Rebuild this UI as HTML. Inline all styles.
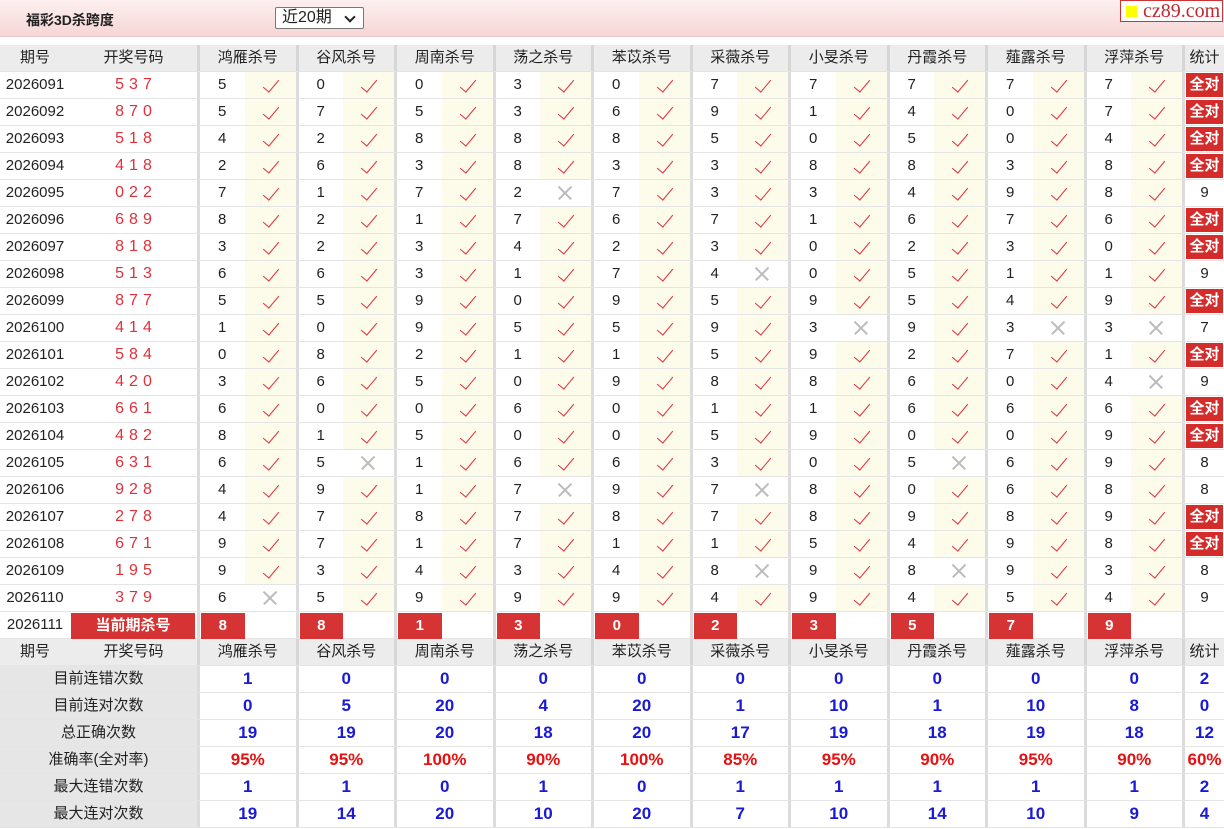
<!DOCTYPE html>
<html><head><meta charset="utf-8">
<style>
*{box-sizing:border-box;margin:0;padding:0}
body{width:1224px;height:829px;overflow:hidden;background:#fff;font-family:"Liberation Sans","Noto Sans CJK SC",sans-serif;font-size:15px;color:#222}
.top{position:absolute;left:0;top:0;width:1224px;height:37px;background:linear-gradient(#fdf0f0,#f6d6d6);border-bottom:1px solid #e8c8c8}
.title{position:absolute;left:26px;top:10px;font-size:14px;font-weight:bold;color:#222}
.sel{position:absolute;left:275px;top:7px;width:89px;height:22px;border:1px solid #777;border-radius:2px;background:#fff;font-size:16px;padding-left:6px;line-height:20px}
.sel:after{content:"";position:absolute;right:9px;top:5px;width:6px;height:6px;border-right:2px solid #222;border-bottom:2px solid #222;transform:rotate(45deg)}
.logo{position:absolute;left:1120px;top:0;width:103px;height:22px;border:1px solid #c33;background:#fff;font-family:"Liberation Serif",serif;font-size:20px;color:#c0282e;line-height:20px;padding-left:22px}
.logo:before{content:"";position:absolute;left:5px;top:5px;width:11px;height:11px;background:#ff0}
.tb{position:absolute;left:0;top:45px;width:1224px}
.r{display:grid;grid-template-columns:70px 127px repeat(10,3px 44.5px 51px) 3px 39px;height:27px;border-bottom:1px solid #e4e4e4}
.r>div{height:26px;line-height:26px;text-align:center;position:relative}
.s{background:#dcdcdc}
.h>div{background:#ececec}
.h>.s{background:#d6d6d6}
.o{color:#e0303a;letter-spacing:5px;font-size:16px;padding-left:5px}
.n{text-align:left!important;padding-left:18px}
.c{background:#fdfbea}
.c:after{content:"";position:absolute;left:22px;top:4px;width:7px;height:15px;border-right:1.6px solid #e23344;border-bottom:1.6px solid #e23344;transform:rotate(40deg)}
.x:before,.x:after{content:"";position:absolute;left:16px;top:12px;width:18px;height:1.5px;background:#bbb;transform:rotate(45deg)}
.x:after{transform:rotate(-45deg)}
.q{background:#d42b2b!important;color:#fff;font-weight:bold;margin:1px;height:24px!important;line-height:24px!important}
.k{background:#d63434;color:#fff;font-weight:bold;margin:1px 0 1px 1px}
.st{display:grid;grid-template-columns:197px repeat(10,3px 95.5px) 3px 39px;height:27px;border-bottom:1px solid #e4e4e4}
.st>div{height:26px;line-height:26px;text-align:center;color:#1a1ad6;font-weight:bold;font-size:17px}
.st>div:first-child{background:#e6e6e6;color:#222;font-weight:normal;font-size:15px}
.st>.s{background:#dcdcdc}
.rd>div{color:#e81010}
</style></head><body>
<div class="top"><div class="title">福彩3D杀跨度</div><div class="sel">近20期</div><div class="logo">cz89.com</div></div>
<div class="tb">
<div class="r h"><div>期号</div><div>开奖号码</div><div class="s"></div><div style="grid-column:span 2">鸿雁杀号</div><div class="s"></div><div style="grid-column:span 2">谷风杀号</div><div class="s"></div><div style="grid-column:span 2">周南杀号</div><div class="s"></div><div style="grid-column:span 2">荡之杀号</div><div class="s"></div><div style="grid-column:span 2">苯苡杀号</div><div class="s"></div><div style="grid-column:span 2">采薇杀号</div><div class="s"></div><div style="grid-column:span 2">小旻杀号</div><div class="s"></div><div style="grid-column:span 2">丹霞杀号</div><div class="s"></div><div style="grid-column:span 2">薤露杀号</div><div class="s"></div><div style="grid-column:span 2">浮萍杀号</div><div class="s"></div><div>统计</div></div>

<div class="r"><div>2026091</div><div class="o">537</div><div class="s"></div><div class="n">5</div><div class="c"></div><div class="s"></div><div class="n">0</div><div class="c"></div><div class="s"></div><div class="n">0</div><div class="c"></div><div class="s"></div><div class="n">3</div><div class="c"></div><div class="s"></div><div class="n">0</div><div class="c"></div><div class="s"></div><div class="n">7</div><div class="c"></div><div class="s"></div><div class="n">7</div><div class="c"></div><div class="s"></div><div class="n">7</div><div class="c"></div><div class="s"></div><div class="n">7</div><div class="c"></div><div class="s"></div><div class="n">7</div><div class="c"></div><div class="s"></div><div class="q">全对</div></div>
<div class="r"><div>2026092</div><div class="o">870</div><div class="s"></div><div class="n">5</div><div class="c"></div><div class="s"></div><div class="n">7</div><div class="c"></div><div class="s"></div><div class="n">5</div><div class="c"></div><div class="s"></div><div class="n">3</div><div class="c"></div><div class="s"></div><div class="n">6</div><div class="c"></div><div class="s"></div><div class="n">9</div><div class="c"></div><div class="s"></div><div class="n">1</div><div class="c"></div><div class="s"></div><div class="n">4</div><div class="c"></div><div class="s"></div><div class="n">0</div><div class="c"></div><div class="s"></div><div class="n">7</div><div class="c"></div><div class="s"></div><div class="q">全对</div></div>
<div class="r"><div>2026093</div><div class="o">518</div><div class="s"></div><div class="n">4</div><div class="c"></div><div class="s"></div><div class="n">2</div><div class="c"></div><div class="s"></div><div class="n">8</div><div class="c"></div><div class="s"></div><div class="n">8</div><div class="c"></div><div class="s"></div><div class="n">8</div><div class="c"></div><div class="s"></div><div class="n">5</div><div class="c"></div><div class="s"></div><div class="n">0</div><div class="c"></div><div class="s"></div><div class="n">5</div><div class="c"></div><div class="s"></div><div class="n">0</div><div class="c"></div><div class="s"></div><div class="n">4</div><div class="c"></div><div class="s"></div><div class="q">全对</div></div>
<div class="r"><div>2026094</div><div class="o">418</div><div class="s"></div><div class="n">2</div><div class="c"></div><div class="s"></div><div class="n">6</div><div class="c"></div><div class="s"></div><div class="n">3</div><div class="c"></div><div class="s"></div><div class="n">8</div><div class="c"></div><div class="s"></div><div class="n">3</div><div class="c"></div><div class="s"></div><div class="n">3</div><div class="c"></div><div class="s"></div><div class="n">8</div><div class="c"></div><div class="s"></div><div class="n">8</div><div class="c"></div><div class="s"></div><div class="n">3</div><div class="c"></div><div class="s"></div><div class="n">8</div><div class="c"></div><div class="s"></div><div class="q">全对</div></div>
<div class="r"><div>2026095</div><div class="o">022</div><div class="s"></div><div class="n">7</div><div class="c"></div><div class="s"></div><div class="n">1</div><div class="c"></div><div class="s"></div><div class="n">7</div><div class="c"></div><div class="s"></div><div class="n">2</div><div class="x"></div><div class="s"></div><div class="n">7</div><div class="c"></div><div class="s"></div><div class="n">3</div><div class="c"></div><div class="s"></div><div class="n">3</div><div class="c"></div><div class="s"></div><div class="n">4</div><div class="c"></div><div class="s"></div><div class="n">9</div><div class="c"></div><div class="s"></div><div class="n">8</div><div class="c"></div><div class="s"></div><div>9</div></div>
<div class="r"><div>2026096</div><div class="o">689</div><div class="s"></div><div class="n">8</div><div class="c"></div><div class="s"></div><div class="n">2</div><div class="c"></div><div class="s"></div><div class="n">1</div><div class="c"></div><div class="s"></div><div class="n">7</div><div class="c"></div><div class="s"></div><div class="n">6</div><div class="c"></div><div class="s"></div><div class="n">7</div><div class="c"></div><div class="s"></div><div class="n">1</div><div class="c"></div><div class="s"></div><div class="n">6</div><div class="c"></div><div class="s"></div><div class="n">7</div><div class="c"></div><div class="s"></div><div class="n">6</div><div class="c"></div><div class="s"></div><div class="q">全对</div></div>
<div class="r"><div>2026097</div><div class="o">818</div><div class="s"></div><div class="n">3</div><div class="c"></div><div class="s"></div><div class="n">2</div><div class="c"></div><div class="s"></div><div class="n">3</div><div class="c"></div><div class="s"></div><div class="n">4</div><div class="c"></div><div class="s"></div><div class="n">2</div><div class="c"></div><div class="s"></div><div class="n">3</div><div class="c"></div><div class="s"></div><div class="n">0</div><div class="c"></div><div class="s"></div><div class="n">2</div><div class="c"></div><div class="s"></div><div class="n">3</div><div class="c"></div><div class="s"></div><div class="n">0</div><div class="c"></div><div class="s"></div><div class="q">全对</div></div>
<div class="r"><div>2026098</div><div class="o">513</div><div class="s"></div><div class="n">6</div><div class="c"></div><div class="s"></div><div class="n">6</div><div class="c"></div><div class="s"></div><div class="n">3</div><div class="c"></div><div class="s"></div><div class="n">1</div><div class="c"></div><div class="s"></div><div class="n">7</div><div class="c"></div><div class="s"></div><div class="n">4</div><div class="x"></div><div class="s"></div><div class="n">0</div><div class="c"></div><div class="s"></div><div class="n">5</div><div class="c"></div><div class="s"></div><div class="n">1</div><div class="c"></div><div class="s"></div><div class="n">1</div><div class="c"></div><div class="s"></div><div>9</div></div>
<div class="r"><div>2026099</div><div class="o">877</div><div class="s"></div><div class="n">5</div><div class="c"></div><div class="s"></div><div class="n">5</div><div class="c"></div><div class="s"></div><div class="n">9</div><div class="c"></div><div class="s"></div><div class="n">0</div><div class="c"></div><div class="s"></div><div class="n">9</div><div class="c"></div><div class="s"></div><div class="n">5</div><div class="c"></div><div class="s"></div><div class="n">9</div><div class="c"></div><div class="s"></div><div class="n">5</div><div class="c"></div><div class="s"></div><div class="n">4</div><div class="c"></div><div class="s"></div><div class="n">9</div><div class="c"></div><div class="s"></div><div class="q">全对</div></div>
<div class="r"><div>2026100</div><div class="o">414</div><div class="s"></div><div class="n">1</div><div class="c"></div><div class="s"></div><div class="n">0</div><div class="c"></div><div class="s"></div><div class="n">9</div><div class="c"></div><div class="s"></div><div class="n">5</div><div class="c"></div><div class="s"></div><div class="n">5</div><div class="c"></div><div class="s"></div><div class="n">9</div><div class="c"></div><div class="s"></div><div class="n">3</div><div class="x"></div><div class="s"></div><div class="n">9</div><div class="c"></div><div class="s"></div><div class="n">3</div><div class="x"></div><div class="s"></div><div class="n">3</div><div class="x"></div><div class="s"></div><div>7</div></div>
<div class="r"><div>2026101</div><div class="o">584</div><div class="s"></div><div class="n">0</div><div class="c"></div><div class="s"></div><div class="n">8</div><div class="c"></div><div class="s"></div><div class="n">2</div><div class="c"></div><div class="s"></div><div class="n">1</div><div class="c"></div><div class="s"></div><div class="n">1</div><div class="c"></div><div class="s"></div><div class="n">5</div><div class="c"></div><div class="s"></div><div class="n">9</div><div class="c"></div><div class="s"></div><div class="n">2</div><div class="c"></div><div class="s"></div><div class="n">7</div><div class="c"></div><div class="s"></div><div class="n">1</div><div class="c"></div><div class="s"></div><div class="q">全对</div></div>
<div class="r"><div>2026102</div><div class="o">420</div><div class="s"></div><div class="n">3</div><div class="c"></div><div class="s"></div><div class="n">6</div><div class="c"></div><div class="s"></div><div class="n">5</div><div class="c"></div><div class="s"></div><div class="n">0</div><div class="c"></div><div class="s"></div><div class="n">9</div><div class="c"></div><div class="s"></div><div class="n">8</div><div class="c"></div><div class="s"></div><div class="n">8</div><div class="c"></div><div class="s"></div><div class="n">6</div><div class="c"></div><div class="s"></div><div class="n">0</div><div class="c"></div><div class="s"></div><div class="n">4</div><div class="x"></div><div class="s"></div><div>9</div></div>
<div class="r"><div>2026103</div><div class="o">661</div><div class="s"></div><div class="n">6</div><div class="c"></div><div class="s"></div><div class="n">0</div><div class="c"></div><div class="s"></div><div class="n">0</div><div class="c"></div><div class="s"></div><div class="n">6</div><div class="c"></div><div class="s"></div><div class="n">0</div><div class="c"></div><div class="s"></div><div class="n">1</div><div class="c"></div><div class="s"></div><div class="n">1</div><div class="c"></div><div class="s"></div><div class="n">6</div><div class="c"></div><div class="s"></div><div class="n">6</div><div class="c"></div><div class="s"></div><div class="n">6</div><div class="c"></div><div class="s"></div><div class="q">全对</div></div>
<div class="r"><div>2026104</div><div class="o">482</div><div class="s"></div><div class="n">8</div><div class="c"></div><div class="s"></div><div class="n">1</div><div class="c"></div><div class="s"></div><div class="n">5</div><div class="c"></div><div class="s"></div><div class="n">0</div><div class="c"></div><div class="s"></div><div class="n">0</div><div class="c"></div><div class="s"></div><div class="n">5</div><div class="c"></div><div class="s"></div><div class="n">9</div><div class="c"></div><div class="s"></div><div class="n">0</div><div class="c"></div><div class="s"></div><div class="n">0</div><div class="c"></div><div class="s"></div><div class="n">9</div><div class="c"></div><div class="s"></div><div class="q">全对</div></div>
<div class="r"><div>2026105</div><div class="o">631</div><div class="s"></div><div class="n">6</div><div class="c"></div><div class="s"></div><div class="n">5</div><div class="x"></div><div class="s"></div><div class="n">1</div><div class="c"></div><div class="s"></div><div class="n">6</div><div class="c"></div><div class="s"></div><div class="n">6</div><div class="c"></div><div class="s"></div><div class="n">3</div><div class="c"></div><div class="s"></div><div class="n">0</div><div class="c"></div><div class="s"></div><div class="n">5</div><div class="x"></div><div class="s"></div><div class="n">6</div><div class="c"></div><div class="s"></div><div class="n">9</div><div class="c"></div><div class="s"></div><div>8</div></div>
<div class="r"><div>2026106</div><div class="o">928</div><div class="s"></div><div class="n">4</div><div class="c"></div><div class="s"></div><div class="n">9</div><div class="c"></div><div class="s"></div><div class="n">1</div><div class="c"></div><div class="s"></div><div class="n">7</div><div class="x"></div><div class="s"></div><div class="n">9</div><div class="c"></div><div class="s"></div><div class="n">7</div><div class="x"></div><div class="s"></div><div class="n">8</div><div class="c"></div><div class="s"></div><div class="n">0</div><div class="c"></div><div class="s"></div><div class="n">6</div><div class="c"></div><div class="s"></div><div class="n">8</div><div class="c"></div><div class="s"></div><div>8</div></div>
<div class="r"><div>2026107</div><div class="o">278</div><div class="s"></div><div class="n">4</div><div class="c"></div><div class="s"></div><div class="n">7</div><div class="c"></div><div class="s"></div><div class="n">8</div><div class="c"></div><div class="s"></div><div class="n">7</div><div class="c"></div><div class="s"></div><div class="n">8</div><div class="c"></div><div class="s"></div><div class="n">7</div><div class="c"></div><div class="s"></div><div class="n">8</div><div class="c"></div><div class="s"></div><div class="n">9</div><div class="c"></div><div class="s"></div><div class="n">8</div><div class="c"></div><div class="s"></div><div class="n">9</div><div class="c"></div><div class="s"></div><div class="q">全对</div></div>
<div class="r"><div>2026108</div><div class="o">671</div><div class="s"></div><div class="n">9</div><div class="c"></div><div class="s"></div><div class="n">7</div><div class="c"></div><div class="s"></div><div class="n">1</div><div class="c"></div><div class="s"></div><div class="n">7</div><div class="c"></div><div class="s"></div><div class="n">1</div><div class="c"></div><div class="s"></div><div class="n">1</div><div class="c"></div><div class="s"></div><div class="n">5</div><div class="c"></div><div class="s"></div><div class="n">4</div><div class="c"></div><div class="s"></div><div class="n">9</div><div class="c"></div><div class="s"></div><div class="n">8</div><div class="c"></div><div class="s"></div><div class="q">全对</div></div>
<div class="r"><div>2026109</div><div class="o">195</div><div class="s"></div><div class="n">9</div><div class="c"></div><div class="s"></div><div class="n">3</div><div class="c"></div><div class="s"></div><div class="n">4</div><div class="c"></div><div class="s"></div><div class="n">3</div><div class="c"></div><div class="s"></div><div class="n">4</div><div class="c"></div><div class="s"></div><div class="n">8</div><div class="x"></div><div class="s"></div><div class="n">9</div><div class="c"></div><div class="s"></div><div class="n">8</div><div class="x"></div><div class="s"></div><div class="n">9</div><div class="c"></div><div class="s"></div><div class="n">3</div><div class="c"></div><div class="s"></div><div>8</div></div>
<div class="r"><div>2026110</div><div class="o">379</div><div class="s"></div><div class="n">6</div><div class="x"></div><div class="s"></div><div class="n">5</div><div class="c"></div><div class="s"></div><div class="n">9</div><div class="c"></div><div class="s"></div><div class="n">9</div><div class="c"></div><div class="s"></div><div class="n">9</div><div class="c"></div><div class="s"></div><div class="n">4</div><div class="c"></div><div class="s"></div><div class="n">9</div><div class="c"></div><div class="s"></div><div class="n">4</div><div class="c"></div><div class="s"></div><div class="n">5</div><div class="c"></div><div class="s"></div><div class="n">4</div><div class="c"></div><div class="s"></div><div>9</div></div>
<div class="r"><div>2026111</div><div class="k" style="margin-right:2px">当前期杀号</div><div class="s"></div><div class="k">8</div><div></div><div class="s"></div><div class="k">8</div><div></div><div class="s"></div><div class="k">1</div><div></div><div class="s"></div><div class="k">3</div><div></div><div class="s"></div><div class="k">0</div><div></div><div class="s"></div><div class="k">2</div><div></div><div class="s"></div><div class="k">3</div><div></div><div class="s"></div><div class="k">5</div><div></div><div class="s"></div><div class="k">7</div><div></div><div class="s"></div><div class="k">9</div><div></div><div class="s"></div><div></div></div>

<div class="r h"><div>期号</div><div>开奖号码</div><div class="s"></div><div style="grid-column:span 2">鸿雁杀号</div><div class="s"></div><div style="grid-column:span 2">谷风杀号</div><div class="s"></div><div style="grid-column:span 2">周南杀号</div><div class="s"></div><div style="grid-column:span 2">荡之杀号</div><div class="s"></div><div style="grid-column:span 2">苯苡杀号</div><div class="s"></div><div style="grid-column:span 2">采薇杀号</div><div class="s"></div><div style="grid-column:span 2">小旻杀号</div><div class="s"></div><div style="grid-column:span 2">丹霞杀号</div><div class="s"></div><div style="grid-column:span 2">薤露杀号</div><div class="s"></div><div style="grid-column:span 2">浮萍杀号</div><div class="s"></div><div>统计</div></div>

<div class="st"><div>目前连错次数</div><div class="s"></div><div>1</div><div class="s"></div><div>0</div><div class="s"></div><div>0</div><div class="s"></div><div>0</div><div class="s"></div><div>0</div><div class="s"></div><div>0</div><div class="s"></div><div>0</div><div class="s"></div><div>0</div><div class="s"></div><div>0</div><div class="s"></div><div>0</div><div class="s"></div><div>2</div></div>
<div class="st"><div>目前连对次数</div><div class="s"></div><div>0</div><div class="s"></div><div>5</div><div class="s"></div><div>20</div><div class="s"></div><div>4</div><div class="s"></div><div>20</div><div class="s"></div><div>1</div><div class="s"></div><div>10</div><div class="s"></div><div>1</div><div class="s"></div><div>10</div><div class="s"></div><div>8</div><div class="s"></div><div>0</div></div>
<div class="st"><div>总正确次数</div><div class="s"></div><div>19</div><div class="s"></div><div>19</div><div class="s"></div><div>20</div><div class="s"></div><div>18</div><div class="s"></div><div>20</div><div class="s"></div><div>17</div><div class="s"></div><div>19</div><div class="s"></div><div>18</div><div class="s"></div><div>19</div><div class="s"></div><div>18</div><div class="s"></div><div>12</div></div>
<div class="st rd"><div>准确率(全对率)</div><div class="s"></div><div>95%</div><div class="s"></div><div>95%</div><div class="s"></div><div>100%</div><div class="s"></div><div>90%</div><div class="s"></div><div>100%</div><div class="s"></div><div>85%</div><div class="s"></div><div>95%</div><div class="s"></div><div>90%</div><div class="s"></div><div>95%</div><div class="s"></div><div>90%</div><div class="s"></div><div>60%</div></div>
<div class="st"><div>最大连错次数</div><div class="s"></div><div>1</div><div class="s"></div><div>1</div><div class="s"></div><div>0</div><div class="s"></div><div>1</div><div class="s"></div><div>0</div><div class="s"></div><div>1</div><div class="s"></div><div>1</div><div class="s"></div><div>1</div><div class="s"></div><div>1</div><div class="s"></div><div>1</div><div class="s"></div><div>2</div></div>
<div class="st"><div>最大连对次数</div><div class="s"></div><div>19</div><div class="s"></div><div>14</div><div class="s"></div><div>20</div><div class="s"></div><div>10</div><div class="s"></div><div>20</div><div class="s"></div><div>7</div><div class="s"></div><div>10</div><div class="s"></div><div>14</div><div class="s"></div><div>10</div><div class="s"></div><div>9</div><div class="s"></div><div>4</div></div>
</div>
</body></html>
